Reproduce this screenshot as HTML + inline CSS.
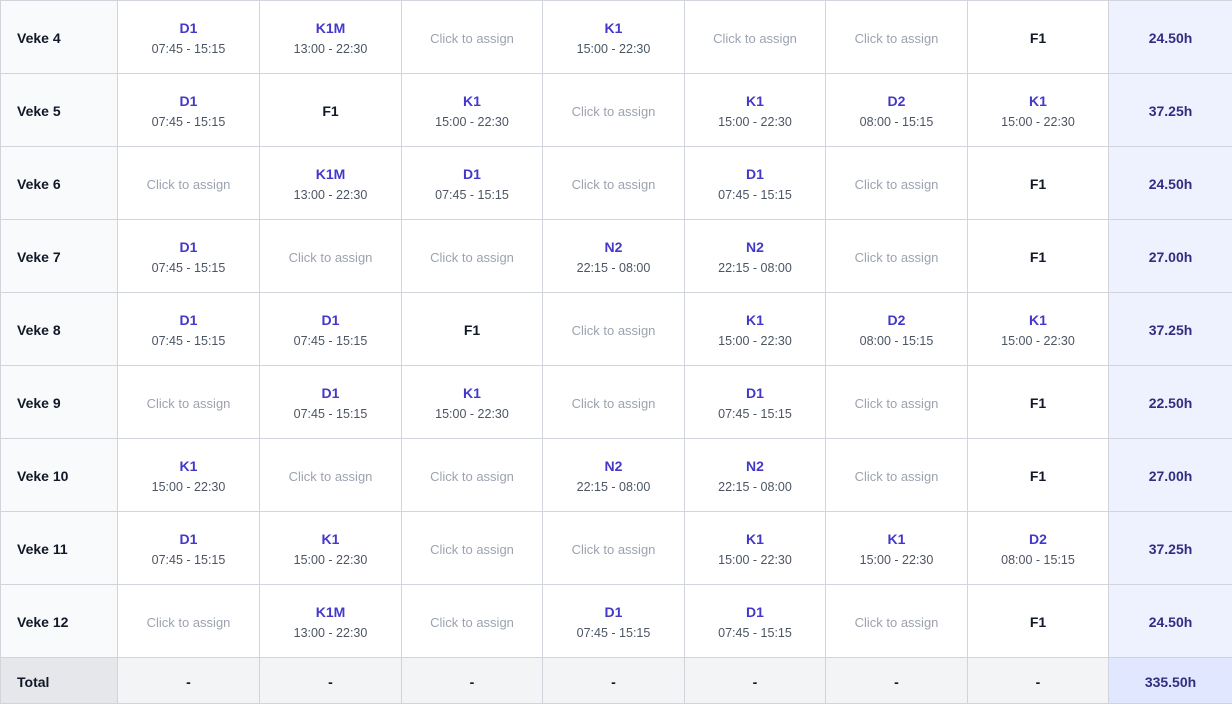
<!DOCTYPE html>
<html><head><meta charset="utf-8"><style>
*{margin:0;padding:0;box-sizing:border-box}
body{width:1232px;height:703px;overflow:hidden;background:#fff;font-family:"Liberation Sans",sans-serif}
table{border-collapse:collapse;table-layout:fixed;width:1232px}
td{border:1px solid #d1d5db;text-align:center;vertical-align:middle;height:73px;padding:2px 0 0 0}
td.w{text-align:left;padding-left:16px;background:#f9fafb;font-size:14px;font-weight:bold;color:#111827}
td.h{background:#eef2ff;color:#312e81;font-weight:bold;font-size:14px}
.c{color:#4338ca;font-weight:bold;font-size:14px;line-height:18px}
.t{color:#4b5563;font-size:12.5px;line-height:16px;margin-top:4px}
.a{color:#9ca3af;font-size:13px}
.f{color:#111827;font-weight:bold;font-size:14px}
tr.tot td{height:46px;background:#f3f4f6;font-weight:bold;font-size:14px;color:#111827}
tr.tot td.w{background:#e5e7eb}
tr.tot td.h{background:#e0e7ff;color:#312e81}
</style></head><body>
<table>
<colgroup><col style="width:117px"><col style="width:142px"><col style="width:142px"><col style="width:141px"><col style="width:142px"><col style="width:141px"><col style="width:142px"><col style="width:141px"><col style="width:124px"></colgroup>
<tr><td class="w">Veke 4</td><td><div class="c">D1</div><div class="t">07:45 - 15:15</div></td><td><div class="c">K1M</div><div class="t">13:00 - 22:30</div></td><td class="a">Click to assign</td><td><div class="c">K1</div><div class="t">15:00 - 22:30</div></td><td class="a">Click to assign</td><td class="a">Click to assign</td><td class="f">F1</td><td class="h">24.50h</td></tr>
<tr><td class="w">Veke 5</td><td><div class="c">D1</div><div class="t">07:45 - 15:15</div></td><td class="f">F1</td><td><div class="c">K1</div><div class="t">15:00 - 22:30</div></td><td class="a">Click to assign</td><td><div class="c">K1</div><div class="t">15:00 - 22:30</div></td><td><div class="c">D2</div><div class="t">08:00 - 15:15</div></td><td><div class="c">K1</div><div class="t">15:00 - 22:30</div></td><td class="h">37.25h</td></tr>
<tr><td class="w">Veke 6</td><td class="a">Click to assign</td><td><div class="c">K1M</div><div class="t">13:00 - 22:30</div></td><td><div class="c">D1</div><div class="t">07:45 - 15:15</div></td><td class="a">Click to assign</td><td><div class="c">D1</div><div class="t">07:45 - 15:15</div></td><td class="a">Click to assign</td><td class="f">F1</td><td class="h">24.50h</td></tr>
<tr><td class="w">Veke 7</td><td><div class="c">D1</div><div class="t">07:45 - 15:15</div></td><td class="a">Click to assign</td><td class="a">Click to assign</td><td><div class="c">N2</div><div class="t">22:15 - 08:00</div></td><td><div class="c">N2</div><div class="t">22:15 - 08:00</div></td><td class="a">Click to assign</td><td class="f">F1</td><td class="h">27.00h</td></tr>
<tr><td class="w">Veke 8</td><td><div class="c">D1</div><div class="t">07:45 - 15:15</div></td><td><div class="c">D1</div><div class="t">07:45 - 15:15</div></td><td class="f">F1</td><td class="a">Click to assign</td><td><div class="c">K1</div><div class="t">15:00 - 22:30</div></td><td><div class="c">D2</div><div class="t">08:00 - 15:15</div></td><td><div class="c">K1</div><div class="t">15:00 - 22:30</div></td><td class="h">37.25h</td></tr>
<tr><td class="w">Veke 9</td><td class="a">Click to assign</td><td><div class="c">D1</div><div class="t">07:45 - 15:15</div></td><td><div class="c">K1</div><div class="t">15:00 - 22:30</div></td><td class="a">Click to assign</td><td><div class="c">D1</div><div class="t">07:45 - 15:15</div></td><td class="a">Click to assign</td><td class="f">F1</td><td class="h">22.50h</td></tr>
<tr><td class="w">Veke 10</td><td><div class="c">K1</div><div class="t">15:00 - 22:30</div></td><td class="a">Click to assign</td><td class="a">Click to assign</td><td><div class="c">N2</div><div class="t">22:15 - 08:00</div></td><td><div class="c">N2</div><div class="t">22:15 - 08:00</div></td><td class="a">Click to assign</td><td class="f">F1</td><td class="h">27.00h</td></tr>
<tr><td class="w">Veke 11</td><td><div class="c">D1</div><div class="t">07:45 - 15:15</div></td><td><div class="c">K1</div><div class="t">15:00 - 22:30</div></td><td class="a">Click to assign</td><td class="a">Click to assign</td><td><div class="c">K1</div><div class="t">15:00 - 22:30</div></td><td><div class="c">K1</div><div class="t">15:00 - 22:30</div></td><td><div class="c">D2</div><div class="t">08:00 - 15:15</div></td><td class="h">37.25h</td></tr>
<tr><td class="w">Veke 12</td><td class="a">Click to assign</td><td><div class="c">K1M</div><div class="t">13:00 - 22:30</div></td><td class="a">Click to assign</td><td><div class="c">D1</div><div class="t">07:45 - 15:15</div></td><td><div class="c">D1</div><div class="t">07:45 - 15:15</div></td><td class="a">Click to assign</td><td class="f">F1</td><td class="h">24.50h</td></tr>
<tr class="tot"><td class="w">Total</td><td>-</td><td>-</td><td>-</td><td>-</td><td>-</td><td>-</td><td>-</td><td class="h">335.50h</td></tr>
</table>
</body></html>
